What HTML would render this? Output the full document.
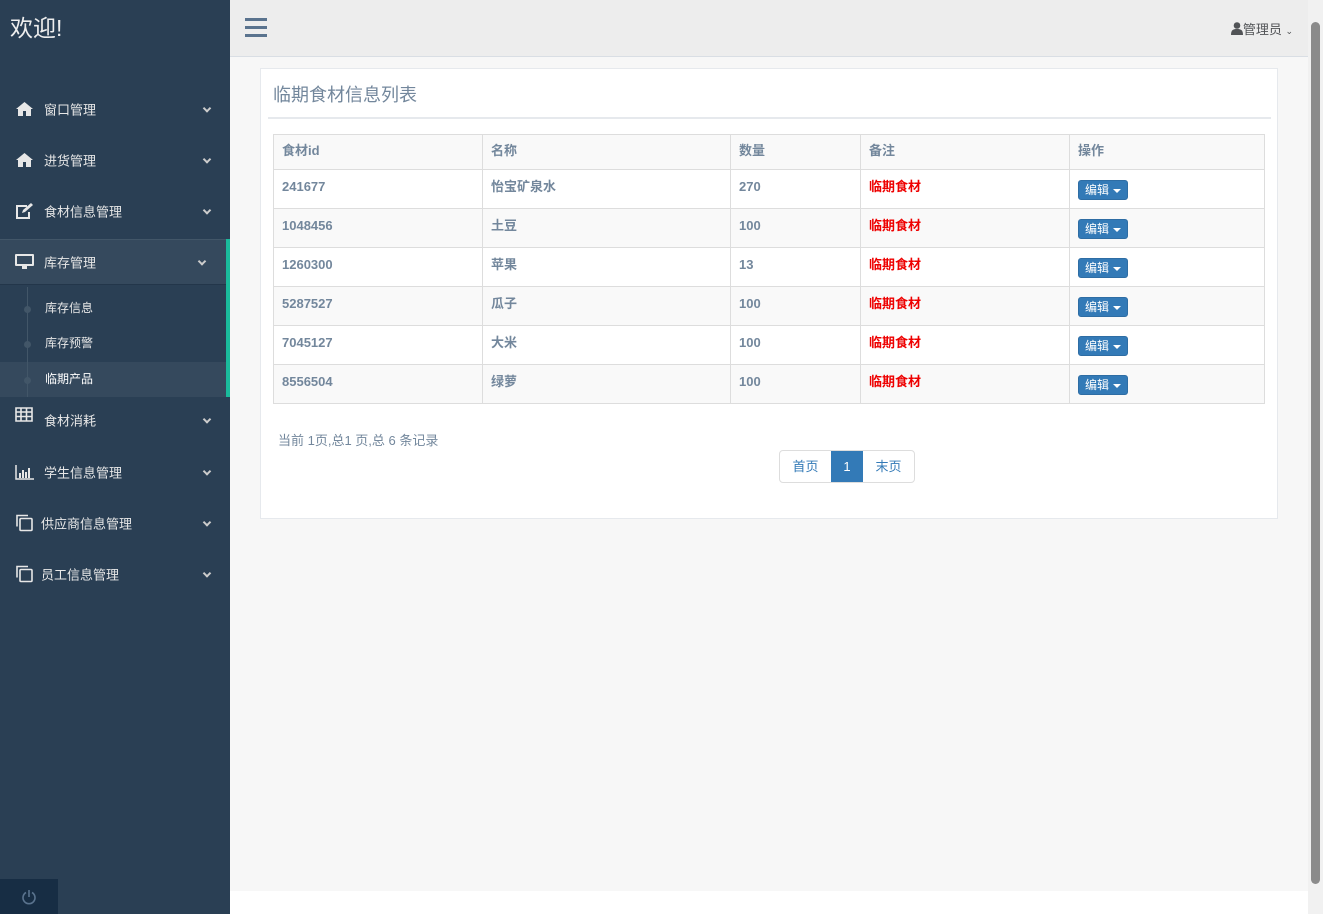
<!DOCTYPE html>
<html><head><meta charset="utf-8"><style>
*{box-sizing:border-box;margin:0;padding:0}
body{width:1323px;height:914px;overflow:hidden;background:#f7f7f7;font-family:"Liberation Sans","Noto Sans CJK SC",sans-serif;color:#73879c;font-size:13px;position:relative}
.side{position:absolute;left:0;top:0;width:230px;height:914px;background:#2a3f54;color:#e7e7e7}
.logo{position:absolute;left:10px;top:11px;font-size:23px;color:#eee;line-height:34px}
.mi{position:absolute;left:0;width:230px;height:50px;font-size:13px}
.mi .ic{position:absolute;left:15px;top:50%;transform:translateY(-50%);width:19px;height:16px}
.mi .t{position:absolute;left:44px;top:50%;transform:translateY(-50%)}
.mi .ch{position:absolute;right:20px;top:50%;transform:translateY(-60%) rotate(45deg);width:6px;height:6px;border-right:2px solid #ccc;border-bottom:2px solid #ccc}
.sub{position:absolute;left:45px;font-size:12px;color:#e7e7e7}
.top{position:absolute;left:230px;top:0;right:15px;height:57px;background:#ededed;border-bottom:1px solid #d9dee4}
.panel{position:absolute;left:260px;top:68px;width:1018px;height:451px;background:#fff;border:1px solid #e6e9ed}
table{position:absolute;left:12px;top:65px;border-collapse:collapse;font-weight:bold;font-size:13px}
td{border:1px solid #ddd;padding:0 8px;height:39px;vertical-align:top;padding-top:9px;line-height:16px}
td span,td{white-space:nowrap}
tr.h td{height:35px;background:#f9f9f9;padding-top:8px}
tr.g td{background:#f9f9f9}
.r{color:#e00}
.btn{display:inline-block;background:#337ab7;color:#fff;border:1px solid #2e6da4;border-radius:3px;font-size:12px;padding:0 6px;line-height:18px;font-weight:normal;margin-top:1px}
.btn::after{content:"";display:inline-block;margin-left:4px;border-left:4px solid transparent;border-right:4px solid transparent;border-top:4px solid #fff;vertical-align:middle}
</style></head><body>
<div class="side">
<div class="logo">欢迎!</div>
<div class="mi" style="top:84px"><svg class="ic" viewBox="0 0 19 16"><path d="M9.5 1 L1 8 L3 8 L3 15 L8 15 L8 10 L11 10 L11 15 L16 15 L16 8 L18 8Z" fill="#e7e7e7"/></svg><span class="t">窗口管理</span><i class="ch"></i></div>
<div class="mi" style="top:135px"><svg class="ic" viewBox="0 0 19 16"><path d="M9.5 1 L1 8 L3 8 L3 15 L8 15 L8 10 L11 10 L11 15 L16 15 L16 8 L18 8Z" fill="#e7e7e7"/></svg><span class="t">进货管理</span><i class="ch"></i></div>
<div class="mi" style="top:186px"><svg class="ic" viewBox="0 0 19 16"><path d="M12 3H2v12h12V9" fill="none" stroke="#e7e7e7" stroke-width="2"/><path d="M7 10l1-3 8-7 2 2-8 7z" fill="#e7e7e7"/></svg><span class="t">食材信息管理</span><i class="ch"></i></div>
<div style="position:absolute;left:0;top:239px;width:230px;height:158px;background:#2a3f54;border-top:1px solid #425668"></div>
<div style="position:absolute;left:0;top:240px;width:226px;height:45px;background:#35495d;border-bottom:1px solid #23364a"></div>
<div style="position:absolute;left:226px;top:239px;width:4px;height:158px;background:#1abb9c"></div>
<div class="mi" style="top:238px;height:47px"><svg class="ic" viewBox="0 0 19 16"><rect x="0" y="0" width="19" height="12" rx="1" fill="#e7e7e7"/><rect x="2" y="2" width="15" height="8" fill="#35495d"/><rect x="7" y="12" width="5" height="3" fill="#e7e7e7"/></svg><span class="t">库存管理</span><i class="ch" style="right:25px"></i></div>
<div style="position:absolute;left:0;top:362px;width:226px;height:35px;background:#35495d"></div>
<div style="position:absolute;left:27px;top:287px;width:1px;height:110px;background:#425668"></div>
<div style="position:absolute;left:24px;top:306px;width:7px;height:7px;border-radius:50%;background:#425668"></div>
<div style="position:absolute;left:24px;top:341px;width:7px;height:7px;border-radius:50%;background:#425668"></div>
<div style="position:absolute;left:24px;top:377px;width:7px;height:7px;border-radius:50%;background:#425668"></div>
<div class="sub" style="top:299px">库存信息</div>
<div class="sub" style="top:334px">库存预警</div>
<div class="sub" style="top:370px;color:#fff">临期产品</div>
<div class="mi" style="top:395px"><svg class="ic" viewBox="0 0 19 16" style="top:40%"><path d="M1 1h16v13H1zM1 5h16M1 9.5h16M6 1v13M11.5 1v13" fill="none" stroke="#e7e7e7" stroke-width="1.6"/></svg><span class="t">食材消耗</span><i class="ch"></i></div>
<div class="mi" style="top:447px"><svg class="ic" viewBox="0 0 19 16"><path d="M1 1v14h18" fill="none" stroke="#e7e7e7" stroke-width="1.5"/><path d="M4 9h2v5H4zM7 6h2v8H7zM10 8h2v6h-2zM13 4h2v10h-2z" fill="#e7e7e7"/></svg><span class="t">学生信息管理</span><i class="ch"></i></div>
<div class="mi" style="top:498px"><svg class="ic" viewBox="0 0 19 19" style="height:19px"><path d="M2 13V2h11" fill="none" stroke="#e7e7e7" stroke-width="1.6"/><rect x="5" y="5" width="12" height="12" rx="1" fill="none" stroke="#e7e7e7" stroke-width="1.6"/></svg><span class="t" style="left:41px">供应商信息管理</span><i class="ch"></i></div>
<div class="mi" style="top:549px"><svg class="ic" viewBox="0 0 19 19" style="height:19px"><path d="M2 13V2h11" fill="none" stroke="#e7e7e7" stroke-width="1.6"/><rect x="5" y="5" width="12" height="12" rx="1" fill="none" stroke="#e7e7e7" stroke-width="1.6"/></svg><span class="t" style="left:41px">员工信息管理</span><i class="ch"></i></div>
<div style="position:absolute;left:0;top:879px;width:58px;height:35px;background:#172d44"><svg width="16" height="16" viewBox="0 0 16 16" style="position:absolute;left:21px;top:10px"><path d="M5 3.5A6 6 0 1 0 11 3.5M8 1v7" fill="none" stroke="#5a738e" stroke-width="1.6"/></svg></div>
</div>
<div class="top">
<div style="position:absolute;left:15px;top:18px;width:22px;height:19px"><div style="height:3px;background:#5a738e;margin-bottom:5px"></div><div style="height:3px;background:#5a738e;margin-bottom:5px"></div><div style="height:3px;background:#5a738e"></div></div>
<div style="position:absolute;right:15px;top:19px;font-size:13px;color:#515356">
<svg width="12" height="13" viewBox="0 0 12 13" style="vertical-align:-1px"><circle cx="6" cy="3.5" r="3.3" fill="#515356"/><path d="M0 13c0-5 2-6 6-6s6 1 6 6z" fill="#515356"/></svg>管理员 <span style="font-size:9px">&#8964;</span></div>
</div>
<div style="position:absolute;left:230px;top:891px;width:1078px;height:23px;background:#fff"></div>
<div style="position:absolute;left:1308px;top:0;width:15px;height:914px;background:#f1f1f1"><div style="position:absolute;left:3px;top:22px;width:9px;height:862px;background:#8b8b8b;border-radius:5px"></div></div>
<div class="panel">
<div style="position:absolute;left:12px;top:12px;font-size:18px;color:#73879c">临期食材信息列表</div>
<div style="position:absolute;left:7px;top:48px;width:1003px;height:2px;background:#e6e9ed"></div>
<table>
<tr class="h"><td style="width:209px">食材id</td><td style="width:248px">名称</td><td style="width:130px">数量</td><td style="width:209px">备注</td><td style="width:195px">操作</td></tr>
<tr><td>241677</td><td>怡宝矿泉水</td><td>270</td><td class="r">临期食材</td><td><span class="btn">编辑</span></td></tr>
<tr class="g"><td>1048456</td><td>土豆</td><td>100</td><td class="r">临期食材</td><td><span class="btn">编辑</span></td></tr>
<tr><td>1260300</td><td>苹果</td><td>13</td><td class="r">临期食材</td><td><span class="btn">编辑</span></td></tr>
<tr class="g"><td>5287527</td><td>瓜子</td><td>100</td><td class="r">临期食材</td><td><span class="btn">编辑</span></td></tr>
<tr><td>7045127</td><td>大米</td><td>100</td><td class="r">临期食材</td><td><span class="btn">编辑</span></td></tr>
<tr class="g"><td>8556504</td><td>绿萝</td><td>100</td><td class="r">临期食材</td><td><span class="btn">编辑</span></td></tr>
</table>
<div style="position:absolute;left:17px;top:361px;font-size:13px">当前 1页,总1 页,总 6 条记录</div>
<div style="position:absolute;left:518px;top:381px;height:33px;display:flex;border:1px solid #ddd;border-radius:4px;overflow:hidden;font-size:13px">
<div style="width:51px;text-align:center;line-height:31px;color:#337ab7">首页</div>
<div style="width:32px;text-align:center;line-height:31px;background:#337ab7;color:#fff">1</div>
<div style="width:51px;text-align:center;line-height:31px;color:#337ab7">末页</div>
</div>
</div>
</body></html>
